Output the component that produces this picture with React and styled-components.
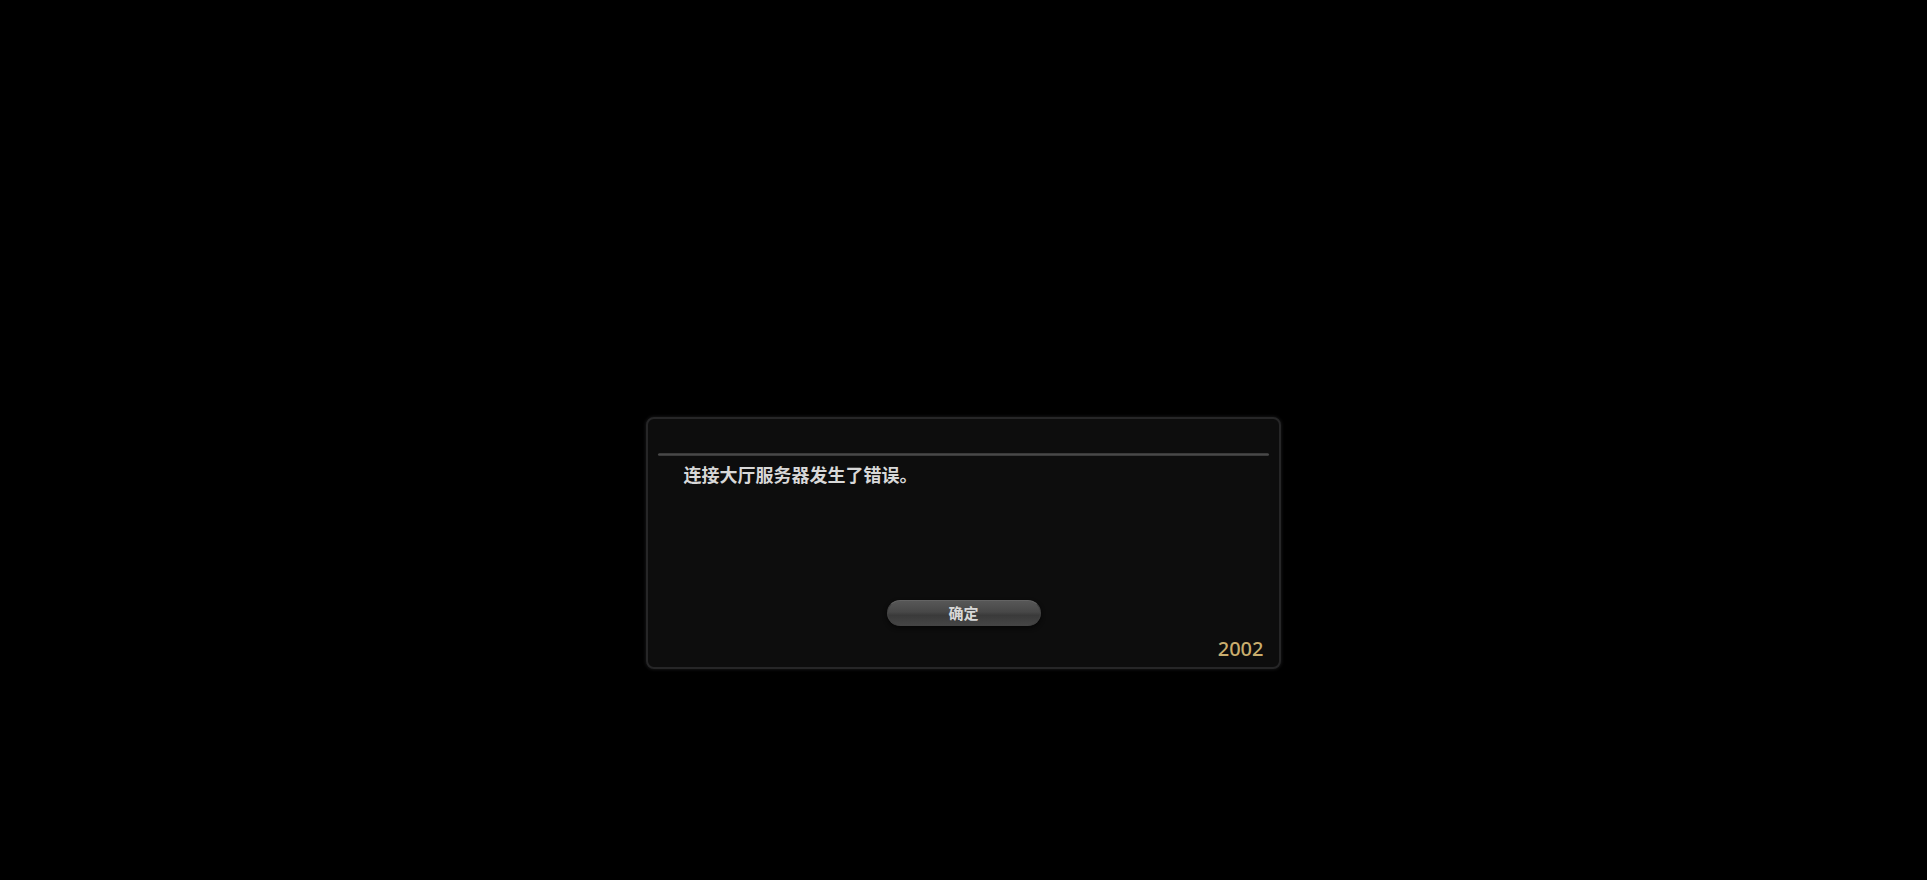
import React from "react";
import styled, { createGlobalStyle } from "styled-components";

const GlobalStyle = createGlobalStyle`
  *, *::before, *::after { box-sizing: border-box; }
  body {
    margin: 0;
    background: #000;
    font-family: "Noto Sans", "Noto Sans CJK SC", sans-serif;
  }
`;

const Screen = styled.main`
  display: grid;
  grid-template-rows: 2fr auto 1fr;
  justify-items: center;
  min-height: 100vh;
  padding-bottom: 2px;
  background: #000;
`;

const Dialog = styled.section`
  grid-row: 2;
  display: flex;
  flex-direction: column;
  width: 33vw;
  min-width: 320px;
  padding: 34px 10px 4px;
  background: #0d0d0d;
  border: 2px solid #262627;
  border-radius: 8px;
  box-shadow: 0 0 3px 1px #131314;
`;

const Divider = styled.hr`
  width: 100%;
  height: 3px;
  margin: 0;
  border: 0;
  border-radius: 2px;
  background: linear-gradient(#333, #484848, #333);
`;

const Message = styled.p`
  min-height: 132px;
  margin: 0;
  padding: 6px 26px 0;
  color: #d8d8d8;
  font-family: "Noto Sans CJK SC", sans-serif;
  font-size: 18px;
  font-weight: 700;
  line-height: 24px;
`;

const ConfirmButton = styled.button`
  align-self: center;
  width: 154px;
  height: 26px;
  margin-top: 12px;
  padding: 0;
  border: 1px solid #444;
  border-top-color: #646464;
  border-radius: 13px;
  background: linear-gradient(#575757, #484848 45%, #3a3a3a 60%, #454545);
  box-shadow: 0 2px 4px #060606;
  color: #d8d8d8;
  font-family: "Noto Sans CJK SC", sans-serif;
  font-size: 15px;
  font-weight: 700;
  line-height: 22px;
  cursor: pointer;
`;

const ErrorCode = styled.span`
  align-self: flex-end;
  margin-top: 9px;
  padding-right: 6px;
  color: #c9ad6d;
  font-size: 20px;
  font-weight: 500;
  line-height: 28px;
`;

export default function App() {
  return (
    <>
      <GlobalStyle />
      <Screen>
        <Dialog role="alertdialog" aria-describedby="error-message">
          <Divider />
          <Message id="error-message">连接大厅服务器发生了错误。</Message>
          <ConfirmButton type="button">确定</ConfirmButton>
          <ErrorCode>2002</ErrorCode>
        </Dialog>
      </Screen>
    </>
  );
}
